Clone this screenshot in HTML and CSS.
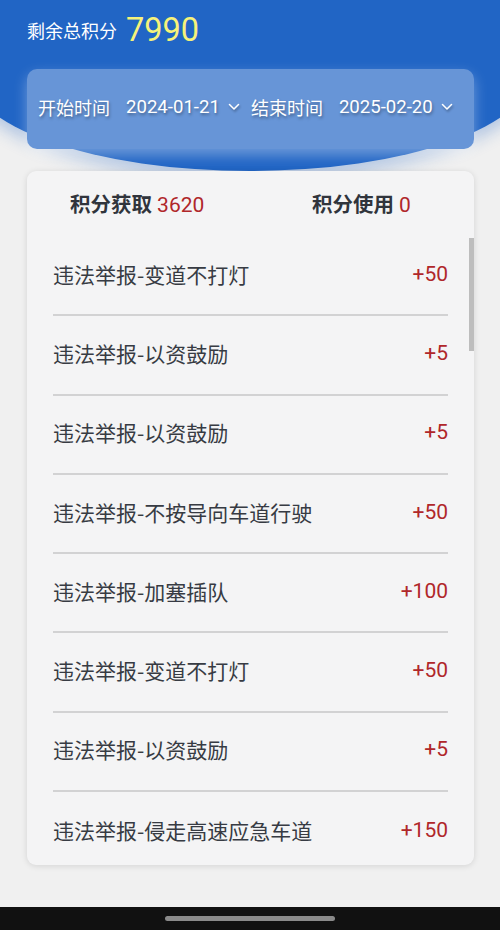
FILE: index.html
```html
<!DOCTYPE html>
<html lang="zh">
<head>
<meta charset="utf-8">
<link rel="stylesheet" href="styles.css">
</head>
<body>
<div class="screen">
  <div class="hero"></div>
  <div class="content">
    <div class="total">
      <span class="total-label">剩余总积分</span>
      <span class="total-value">7990</span>
    </div>
    <div class="filter">
      <span class="f-label">开始时间</span>
      <span class="f-date">2024-01-21</span>
      <svg class="chev" viewBox="0 0 12 8" width="12" height="8"><path d="M1.5 1.5 L6 6 L10.5 1.5" fill="none" stroke="#fff" stroke-width="1.5" stroke-linecap="round" stroke-linejoin="round"/></svg>
      <span class="f-label second">结束时间</span>
      <span class="f-date">2025-02-20</span>
      <svg class="chev" viewBox="0 0 12 8" width="12" height="8"><path d="M1.5 1.5 L6 6 L10.5 1.5" fill="none" stroke="#fff" stroke-width="1.5" stroke-linecap="round" stroke-linejoin="round"/></svg>
    </div>
    <div class="card">
      <div class="summary">
        <div class="sum-item"><b>积分获取</b> <span class="red">3620</span></div>
        <div class="sum-item"><b>积分使用</b> <span class="red">0</span></div>
      </div>
      <div class="list">
        <div class="row"><span class="name">违法举报-变道不打灯</span><span class="pts">+50</span></div>
        <div class="row"><span class="name">违法举报-以资鼓励</span><span class="pts">+5</span></div>
        <div class="row"><span class="name">违法举报-以资鼓励</span><span class="pts">+5</span></div>
        <div class="row"><span class="name">违法举报-不按导向车道行驶</span><span class="pts">+50</span></div>
        <div class="row"><span class="name">违法举报-加塞插队</span><span class="pts">+100</span></div>
        <div class="row"><span class="name">违法举报-变道不打灯</span><span class="pts">+50</span></div>
        <div class="row"><span class="name">违法举报-以资鼓励</span><span class="pts">+5</span></div>
        <div class="row last"><span class="name">违法举报-侵走高速应急车道</span><span class="pts">+150</span></div>
        <div class="scrollbar"></div>
      </div>
    </div>
  </div>
  <div class="navbar"><div class="handle"></div></div>
</div>
</body>
</html>
```
FILE: styles.css
```css
html, body {
  margin: 0;
  padding: 0;
}
body {
  width: 500px;
  height: 930px;
  overflow: hidden;
  background: #f0f0f0;
  font-family: Roboto, "Noto Sans CJK SC", sans-serif;
}
.screen {
  position: relative;
  width: 500px;
  height: 930px;
  overflow: hidden;
  display: flex;
  flex-direction: column;
}
.hero {
  position: absolute;
  left: -33px;
  top: 0;
  width: 566px;
  height: 171px;
  background: #2165c5;
  border-radius: 0 0 50% 50% / 0 0 100px 100px;
  box-shadow: 0 8px 16px rgba(33, 101, 197, 0.3);
}
.content {
  position: relative;
  flex: 1;
  padding: 0 26px 0 27px;
  display: flex;
  flex-direction: column;
}
.total {
  height: 60px;
  display: flex;
  align-items: center;
  color: #fff;
}
.total-label {
  font-family: "Noto Sans CJK SC", sans-serif;
  font-size: 18px;
  margin-right: 9px;
}
.total-value {
  font-family: Roboto, sans-serif;
  font-size: 32.5px;
  color: #f6f27a;
}
.filter {
  margin-top: 9px;
  height: 80px;
  background: #6795d7;
  border-radius: 10px;
  display: flex;
  align-items: center;
  padding: 0 11px 4px;
  box-sizing: border-box;
  color: #fff;
  box-shadow: 0 6px 14px rgba(255, 255, 255, 0.35);
  text-shadow: 1px 2px 3px rgba(0, 0, 0, 0.35);
}
.f-label {
  font-family: "Noto Sans CJK SC", sans-serif;
  font-size: 18px;
  margin-right: 16px;
}
.f-label.second {
  margin-left: 11px;
}
.f-date {
  font-family: Roboto, sans-serif;
  font-size: 18.6px;
}
.chev {
  margin-left: 8px;
  filter: drop-shadow(1px 2px 1px rgba(0,0,0,0.3));
}
.card {
  margin-top: 22px;
  height: 694px;
  background: #f4f4f5;
  border-radius: 9px;
  box-shadow: 0 1px 6px rgba(0, 0, 0, 0.12);
  display: flex;
  flex-direction: column;
  overflow: hidden;
}
.summary {
  flex: 0 0 66px;
  box-sizing: border-box;
  display: flex;
  align-items: center;
  padding: 0 0 2px 43px;
  font-size: 20.5px;
}
.sum-item {
  flex: 0 0 242px;
  color: #30343c;
}
.sum-item b {
  font-family: "Noto Sans CJK SC", sans-serif;
  font-weight: 700;
}
.red {
  color: #b0272a;
  font-family: Roboto, sans-serif;
  font-size: 21px;
}
.list {
  position: relative;
  padding: 0 26px;
}
.row {
  height: 79.3px;
  box-sizing: border-box;
  border-bottom: 2px solid #d2d2d3;
  display: flex;
  align-items: center;
  justify-content: space-between;
  padding-bottom: 4px;
}
.row.last {
  border-bottom: none;
}
.name {
  font-family: "Noto Sans CJK SC", sans-serif;
  font-size: 21px;
  color: #373b43;
}
.pts {
  font-family: Roboto, sans-serif;
  font-size: 21px;
  color: #b0272a;
}
.scrollbar {
  position: absolute;
  right: 0;
  top: 1px;
  width: 5px;
  height: 113px;
  background: #bdbdbd;
}
.navbar {
  flex: 0 0 23px;
  background: #111;
  display: flex;
  justify-content: center;
  align-items: center;
}
.handle {
  width: 170px;
  height: 5px;
  border-radius: 3px;
  background: #8a8a8a;
}
```
